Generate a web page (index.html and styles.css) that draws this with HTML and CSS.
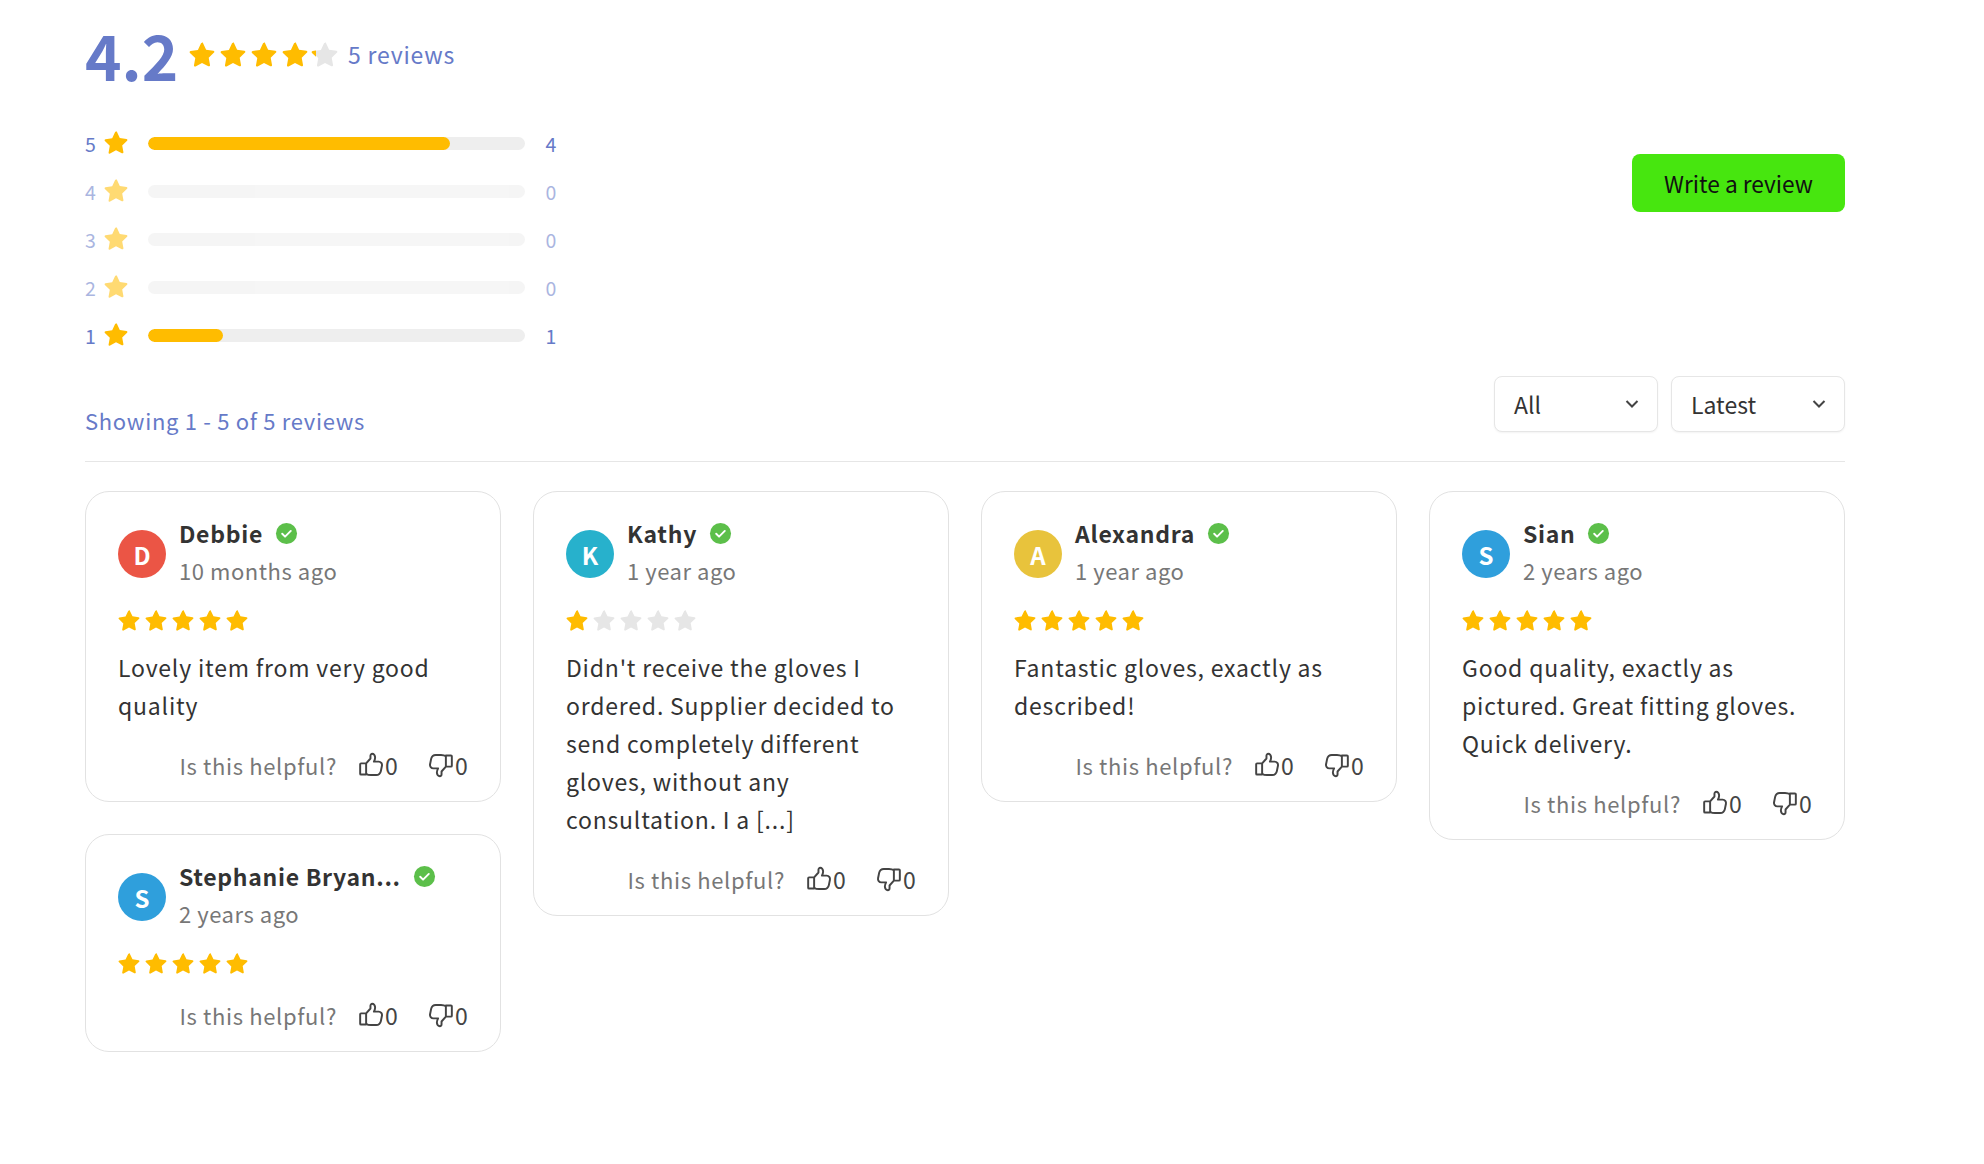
FILE: index.html
```html
<!DOCTYPE html>
<html lang="en">
<head>
<meta charset="utf-8">
<title>Reviews</title>
<link rel="stylesheet" href="styles.css">
</head>
<body>
<svg class="defs" width="0" height="0" aria-hidden="true">
  <defs>
    <symbol id="star" viewBox="0 0 24 24"><path d="M12 1.2c.4 0 .7.2.9.6l2.9 6.2 6.7.9c.9.1 1.2 1.2.6 1.8l-4.9 4.7 1.2 6.7c.2.9-.8 1.600-1.500 1.100L12 20.300l-5.900 3.200c-.8.400-1.700-.2-1.500-1.100l1.200-6.700-4.900-4.700c-.6-.6-.3-1.700.6-1.800l6.700-.9 2.900-6.200c.2-.4.500-.6.900-.6z"/></symbol>
    <symbol id="up" viewBox="0 0 24 24"><path d="M7.500 10.500 11.500 6V3.400c0-1 .8-1.700 1.600-1.700 1.500 0 2.700 1.500 2.700 3.300 0 1.300-.5 2.700-1.100 3.900h4.400c2 0 3.400 1.900 3 3.800l-1 5c-.5 2.300-2.200 3.600-4.300 3.600h-4.800c-1.900 0-3.400-.4-4.500-1.300M7.500 10.500H2.800c-.5 0-.8.300-.8.800v8.700c0 .5.300.8.800.8h4.700z"/></symbol>
    <symbol id="down" viewBox="0 0 24 24"><path d="M16.500 13.500 12.500 18v2.600c0 1-.8 1.700-1.600 1.700-1.500 0-2.700-1.500-2.700-3.300 0-1.300.5-2.700 1.100-3.900H4.900c-2 0-3.400-1.900-3-3.800l1-5C3.400 4 5.100 2.700 7.200 2.700H12c1.900 0 3.400.4 4.500 1.300M16.500 13.500h4.700c.5 0 .8-.3.800-.8V4c0-.5-.3-.8-.8-.8h-4.700z"/></symbol>
    <symbol id="check" viewBox="0 0 24 24"><circle cx="12" cy="12" r="11" fill="#5cbf4a"/><path d="M7.500 12.300l3 3 6-6" fill="none" stroke="#fff" stroke-width="2" stroke-linecap="round" stroke-linejoin="round"/></symbol>
    <symbol id="chev" viewBox="0 0 14 10"><path d="M1.500 2 7 7.500 12.500 2" fill="none" stroke="currentColor" stroke-width="2"/></symbol>
  </defs>
</svg>

<main class="page">
  <section class="summary">
    <div class="summary-left">
      <div class="score-line">
        <span class="score">4.2</span>
        <span class="big-stars">
          <svg class="big-star on"><use href="#star"/></svg>
          <svg class="big-star on"><use href="#star"/></svg>
          <svg class="big-star on"><use href="#star"/></svg>
          <svg class="big-star on"><use href="#star"/></svg>
          <span class="part-star">
            <svg class="big-star off"><use href="#star"/></svg>
            <span class="part-clip"><svg class="big-star on"><use href="#star"/></svg></span>
          </span>
        </span>
        <span class="score-count">5 reviews</span>
      </div>
      <div class="bars">
        <div class="bar-row"><span class="bar-num">5</span><svg class="bar-star"><use href="#star"/></svg><span class="track"><span class="fill" style="width:80%"></span></span><span class="bar-count">4</span></div>
        <div class="bar-row dim"><span class="bar-num">4</span><svg class="bar-star"><use href="#star"/></svg><span class="track"></span><span class="bar-count">0</span></div>
        <div class="bar-row dim"><span class="bar-num">3</span><svg class="bar-star"><use href="#star"/></svg><span class="track"></span><span class="bar-count">0</span></div>
        <div class="bar-row dim"><span class="bar-num">2</span><svg class="bar-star"><use href="#star"/></svg><span class="track"></span><span class="bar-count">0</span></div>
        <div class="bar-row"><span class="bar-num">1</span><svg class="bar-star"><use href="#star"/></svg><span class="track"><span class="fill" style="width:20%"></span></span><span class="bar-count">1</span></div>
      </div>
    </div>
    <button class="write">Write a review</button>
  </section>

  <section class="toolbar">
    <span class="showing">Showing 1 - 5 of 5 reviews</span>
    <div class="selects">
      <div class="select sel-all"><span>All</span><svg class="chev"><use href="#chev"/></svg></div>
      <div class="select sel-latest"><span>Latest</span><svg class="chev"><use href="#chev"/></svg></div>
    </div>
  </section>

  <section class="grid">
    <div class="col">
      <article class="card">
        <header class="who"><span class="avatar red">D</span><div class="who-text"><div class="name-line"><span class="name">Debbie</span><svg class="badge"><use href="#check"/></svg></div><div class="when">10 months ago</div></div></header>
        <div class="stars"><svg class="s on"><use href="#star"/></svg><svg class="s on"><use href="#star"/></svg><svg class="s on"><use href="#star"/></svg><svg class="s on"><use href="#star"/></svg><svg class="s on"><use href="#star"/></svg></div>
        <p class="text">Lovely item from very good quality</p>
        <footer class="helpful"><span class="ask">Is this helpful?</span><span class="vote"><svg class="thumb"><use href="#up"/></svg>0</span><span class="vote"><svg class="thumb"><use href="#down"/></svg>0</span></footer>
      </article>
      <article class="card">
        <header class="who"><span class="avatar blue">S</span><div class="who-text"><div class="name-line"><span class="name">Stephanie Bryan...</span><svg class="badge"><use href="#check"/></svg></div><div class="when">2 years ago</div></div></header>
        <div class="stars"><svg class="s on"><use href="#star"/></svg><svg class="s on"><use href="#star"/></svg><svg class="s on"><use href="#star"/></svg><svg class="s on"><use href="#star"/></svg><svg class="s on"><use href="#star"/></svg></div>
        <footer class="helpful"><span class="ask">Is this helpful?</span><span class="vote"><svg class="thumb"><use href="#up"/></svg>0</span><span class="vote"><svg class="thumb"><use href="#down"/></svg>0</span></footer>
      </article>
    </div>
    <div class="col">
      <article class="card">
        <header class="who"><span class="avatar teal">K</span><div class="who-text"><div class="name-line"><span class="name">Kathy</span><svg class="badge"><use href="#check"/></svg></div><div class="when">1 year ago</div></div></header>
        <div class="stars"><svg class="s on"><use href="#star"/></svg><svg class="s off"><use href="#star"/></svg><svg class="s off"><use href="#star"/></svg><svg class="s off"><use href="#star"/></svg><svg class="s off"><use href="#star"/></svg></div>
        <p class="text">Didn't receive the gloves I ordered. Supplier decided to send completely different gloves, without any consultation. I a [...]</p>
        <footer class="helpful"><span class="ask">Is this helpful?</span><span class="vote"><svg class="thumb"><use href="#up"/></svg>0</span><span class="vote"><svg class="thumb"><use href="#down"/></svg>0</span></footer>
      </article>
    </div>
    <div class="col">
      <article class="card">
        <header class="who"><span class="avatar yellow">A</span><div class="who-text"><div class="name-line"><span class="name">Alexandra</span><svg class="badge"><use href="#check"/></svg></div><div class="when">1 year ago</div></div></header>
        <div class="stars"><svg class="s on"><use href="#star"/></svg><svg class="s on"><use href="#star"/></svg><svg class="s on"><use href="#star"/></svg><svg class="s on"><use href="#star"/></svg><svg class="s on"><use href="#star"/></svg></div>
        <p class="text">Fantastic gloves, exactly as described!</p>
        <footer class="helpful"><span class="ask">Is this helpful?</span><span class="vote"><svg class="thumb"><use href="#up"/></svg>0</span><span class="vote"><svg class="thumb"><use href="#down"/></svg>0</span></footer>
      </article>
    </div>
    <div class="col">
      <article class="card">
        <header class="who"><span class="avatar blue">S</span><div class="who-text"><div class="name-line"><span class="name">Sian</span><svg class="badge"><use href="#check"/></svg></div><div class="when">2 years ago</div></div></header>
        <div class="stars"><svg class="s on"><use href="#star"/></svg><svg class="s on"><use href="#star"/></svg><svg class="s on"><use href="#star"/></svg><svg class="s on"><use href="#star"/></svg><svg class="s on"><use href="#star"/></svg></div>
        <p class="text">Good quality, exactly as pictured. Great fitting gloves. Quick delivery.</p>
        <footer class="helpful"><span class="ask">Is this helpful?</span><span class="vote"><svg class="thumb"><use href="#up"/></svg>0</span><span class="vote"><svg class="thumb"><use href="#down"/></svg>0</span></footer>
      </article>
    </div>
  </section>
</main>
</body>
</html>
```

FILE: styles.css
```css
* { box-sizing: border-box; }
html, body { margin: 0; background: #fff; }
body { font-family: "Noto Sans CJK JP", "Noto Sans", sans-serif; color: #333; }
.defs { position: absolute; }
.page { width: 1984px; padding: 21px 139px 0 85px; }

.summary { display: flex; justify-content: space-between; align-items: center; height: 341px; }
.summary-left { width: 520px; align-self: flex-start; }
.score-line { display: flex; align-items: center; height: 66px; color: #667ac8; }
.score { font-size: 62px; font-weight: 700; line-height: 66px; width: 104px; }
.big-stars { display: flex; gap: 5px; width: 156px; }
.big-star { width: 26px; height: 26px; display: block; }
.big-star.on { fill: #ffbc00; }
.big-star.off { fill: #e6e6e6; }
.part-star { position: relative; width: 26px; height: 26px; margin-left: -1px; }
.part-clip { position: absolute; left: -1px; top: 0; width: 5px; height: 26px; overflow: hidden; }
.score-count { font-size: 23px; letter-spacing: .8px; margin-left: 3px; }

.bars { margin-top: 32px; display: flex; flex-direction: column; }
.bar-row { display: flex; align-items: center; height: 48px; color: #667ac8; font-size: 19.500px; }
.bar-row.dim { opacity: .55; }
.bar-num { width: 19px; text-align: left; }
.bar-star { width: 24px; height: 24px; fill: #ffbc00; margin-top: -3px; }
.track { width: 377px; height: 13px; margin-left: 20px; background: #eee; border-radius: 7px; overflow: hidden; display: block; }
.fill { display: block; height: 100%; background: #ffbc00; border-radius: 7px; }
.bar-count { margin-left: 19px; width: 14px; text-align: center; }

.write { width: 213px; height: 58px; border: 0; border-radius: 8px; background: #47e60f; color: #111; font: 400 22.700px "Noto Sans CJK JP", sans-serif; padding: 0; margin-top: -17px; }

.toolbar { display: flex; justify-content: space-between; align-items: flex-end; height: 100px; padding-bottom: 22px; border-bottom: 1px solid #e6e6e6; }
.showing { font-size: 22px; color: #667ac8; letter-spacing: .7px; line-height: 38px; }
.selects { display: flex; gap: 13px; margin-bottom: 7px; }
.select { display: flex; align-items: center; justify-content: space-between; height: 56px; padding: 0 18px 0 19px; background: #fff; border: 1px solid #e6e6e6; border-radius: 8px; box-shadow: 0 1px 2px rgba(0,0,0,.05); font-size: 23px; color: #333; }
.sel-all { width: 164px; }
.sel-latest { width: 174px; }
.chev { width: 14px; height: 10px; color: #444; }

.grid { display: grid; grid-template-columns: repeat(4, 416px); gap: 32px; margin-top: 29px; align-items: start; }
.col { display: flex; flex-direction: column; gap: 32px; }
.card { border: 1px solid #e2e2e2; border-radius: 24px; padding: 32px 32px 17px; }
.who { display: flex; align-items: center; gap: 13px; height: 60px; }
.avatar { width: 48px; height: 48px; border-radius: 50%; display: flex; align-items: center; justify-content: center; color: #fff; font-size: 24px; font-weight: 700; flex: none; }
.red { background: #eb5545; }
.blue { background: #2f9fdc; }
.teal { background: #27b1cc; }
.yellow { background: #e8c33c; }
.who-text { display: flex; flex-direction: column; }
.name-line { display: flex; align-items: center; height: 38px; gap: 12px; margin-top: -6px; }
.name { font-size: 23px; font-weight: 700; letter-spacing: .7px; color: #333; white-space: nowrap; }
.badge { width: 23px; height: 23px; margin-top: 1px; }
.when { font-size: 22px; line-height: 36px; letter-spacing: .55px; color: #777; }
.stars { display: flex; gap: 5px; margin-top: 25px; height: 22px; }
.s { width: 22px; height: 22px; }
.s.on { fill: #ffbc00; }
.s.off { fill: #e6e6e6; }
.text { margin: 17px 0 2px; font-size: 23px; line-height: 38px; letter-spacing: .8px; color: #333; }
.helpful { display: flex; justify-content: flex-end; align-items: center; margin-top: 22px; height: 38px; font-size: 23px; }
.ask { color: #777; font-size: 22px; letter-spacing: .65px; margin-right: 21px; }
.vote { display: inline-flex; align-items: center; color: #444; width: 40px; }
.vote + .vote { margin-left: 30px; }
.thumb { width: 26px; height: 26px; flex: none; fill: none; stroke: #444; stroke-width: 1.8; stroke-linejoin: round; margin-right: 1px; }
```
